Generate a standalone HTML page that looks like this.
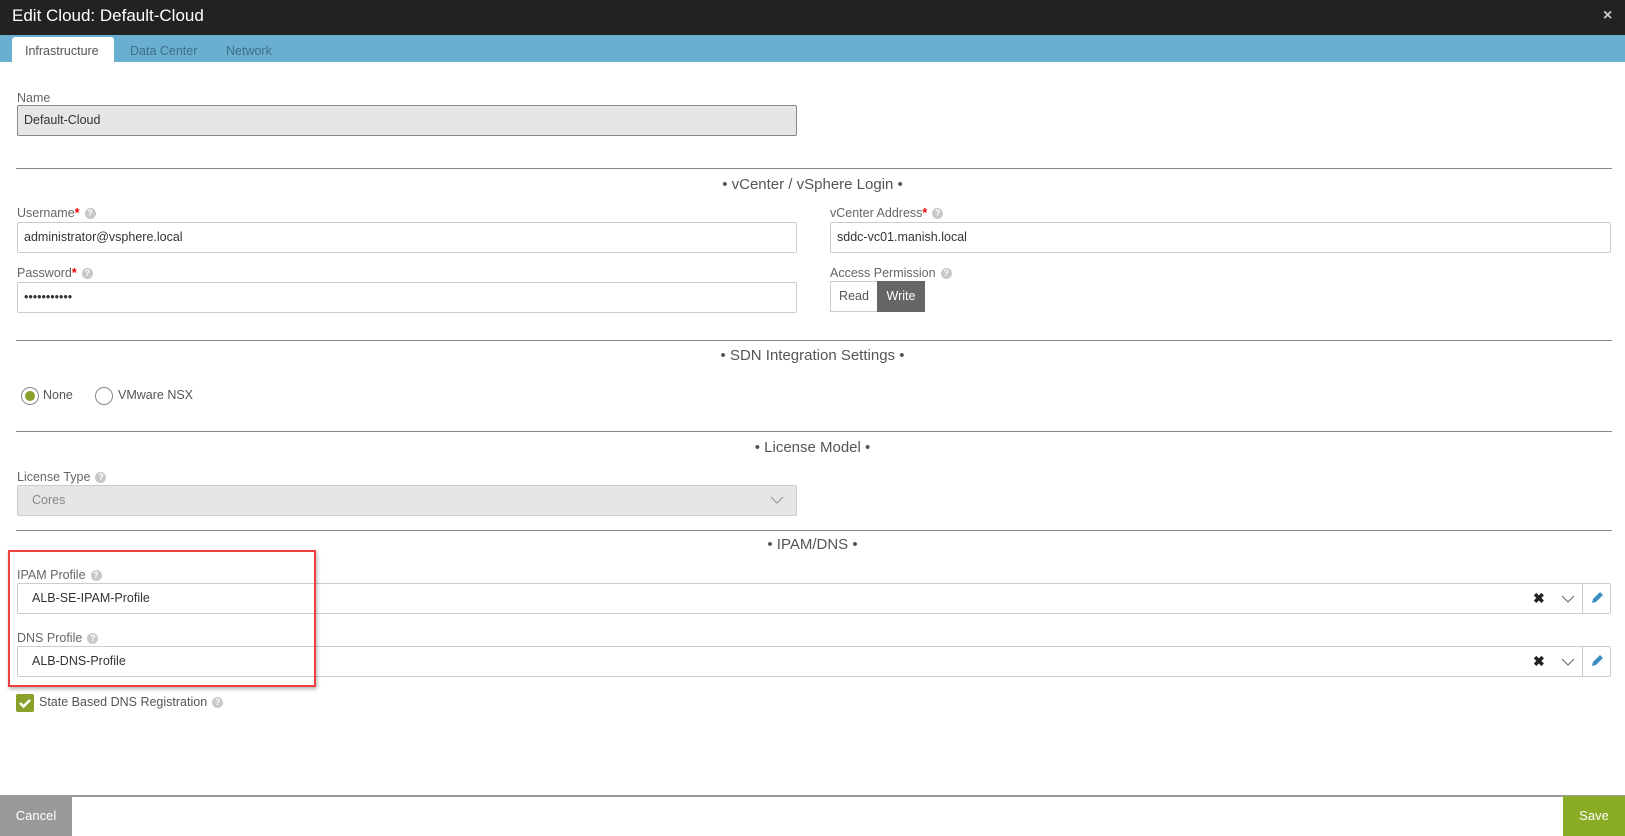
<!DOCTYPE html>
<html><head><meta charset="utf-8"><style>
*{box-sizing:border-box;margin:0;padding:0}
body{width:1625px;height:836px;position:relative;overflow:hidden;background:#fff;font-family:"Liberation Sans",sans-serif;font-size:13px;color:#555}
.a{position:absolute}
.lbl{position:absolute;font-size:12.5px;color:#666}
.req{color:#e00;font-weight:bold}
.q{display:inline-block;width:11px;height:11px;border-radius:50%;background:#c8c8c8;color:#fff;font-size:9px;line-height:11px;text-align:center;font-weight:bold;margin-left:5px;vertical-align:1px}
.inp{position:absolute;border:1px solid #ccc;border-radius:2px;height:31px;line-height:29px;padding-left:6px;font-size:12.5px;color:#333;background:#fff}
.sep{position:absolute;left:16px;right:13px;height:1px;background:#888}
.sect{position:absolute;left:0;right:0;text-align:center;font-size:15px;color:#555}
</style></head><body>
<div class="a" style="left:0;top:0;width:1625px;height:35px;background:#222"></div>
<div class="a" style="left:12px;top:6px;color:#fff;font-size:17px">Edit Cloud: Default-Cloud</div>
<div class="a" style="left:1603px;top:7px;color:#ccc;font-size:16px;font-weight:bold">×</div>
<div class="a" style="left:0;top:35px;width:1625px;height:27px;background:#6aaed0"></div>
<div class="a" style="left:12px;top:37px;width:102px;height:25px;background:#fff;border-radius:3px 3px 0 0"></div>
<div class="a" style="left:25px;top:44px;font-size:12.5px;color:#555">Infrastructure</div>
<div class="a" style="left:130px;top:44px;font-size:12.5px;color:#3d6f8a">Data Center</div>
<div class="a" style="left:226px;top:44px;font-size:12.5px;color:#3d6f8a">Network</div>

<div class="lbl" style="left:17px;top:91px">Name</div>
<div class="inp" style="left:17px;top:105px;width:780px;background:#e6e6e6;border-color:#888">Default-Cloud</div>

<div class="sep" style="top:168px"></div>
<div class="sect" style="top:176px">• vCenter / vSphere Login •</div>
<div class="lbl" style="left:17px;top:206px">Username<span class="req">*</span><span class="q">?</span></div>
<div class="inp" style="left:17px;top:222px;width:780px">administrator@vsphere.local</div>
<div class="lbl" style="left:17px;top:266px">Password<span class="req">*</span><span class="q">?</span></div>
<div class="inp" style="left:17px;top:282px;width:780px">•••••••••••</div>
<div class="lbl" style="left:830px;top:206px">vCenter Address<span class="req">*</span><span class="q">?</span></div>
<div class="inp" style="left:830px;top:222px;width:781px">sddc-vc01.manish.local</div>
<div class="lbl" style="left:830px;top:266px">Access Permission<span class="q">?</span></div>
<div class="a" style="left:830px;top:281px;width:47px;height:31px;border:1px solid #ccc;border-right:none;text-align:center;line-height:29px;font-size:12.5px;color:#555">Read</div>
<div class="a" style="left:877px;top:281px;width:48px;height:31px;background:#666;text-align:center;line-height:31px;font-size:12.5px;color:#fff">Write</div>

<div class="sep" style="top:340px"></div>
<div class="sect" style="top:347px">• SDN Integration Settings •</div>
<div class="a" style="left:21px;top:387px;width:18px;height:18px;border:1px solid #888;border-radius:50%"></div>
<div class="a" style="left:25px;top:391px;width:10px;height:10px;background:#88a12a;border-radius:50%"></div>
<div class="a" style="left:43px;top:388px;font-size:12.5px">None</div>
<div class="a" style="left:95px;top:387px;width:18px;height:18px;border:1px solid #888;border-radius:50%"></div>
<div class="a" style="left:118px;top:388px;font-size:12.5px">VMware NSX</div>

<div class="sep" style="top:431px"></div>
<div class="sect" style="top:439px">• License Model •</div>
<div class="lbl" style="left:17px;top:470px">License Type<span class="q">?</span></div>
<div class="inp" style="left:17px;top:485px;width:780px;background:#e6e6e6;color:#888;padding-left:14px">Cores</div>
<svg class="a" style="left:770px;top:495px" width="14" height="10"><path d="M1 2l6 6 6-6" fill="none" stroke="#999" stroke-width="1.2"/></svg>

<div class="sep" style="top:530px"></div>
<div class="sect" style="top:536px">• IPAM/DNS •</div>
<div class="lbl" style="left:17px;top:568px">IPAM Profile<span class="q">?</span></div>
<div class="inp" style="left:17px;top:583px;width:1594px;padding-left:14px">ALB-SE-IPAM-Profile</div>
<div class="lbl" style="left:17px;top:631px">DNS Profile<span class="q">?</span></div>
<div class="inp" style="left:17px;top:646px;width:1594px;padding-left:14px">ALB-DNS-Profile</div>
<div class="a" style="left:1582px;top:583px;width:1px;height:31px;background:#ccc"></div>
<div class="a" style="left:1582px;top:646px;width:1px;height:31px;background:#ccc"></div>
<div class="a" style="left:1533px;top:590px;font-size:14px;font-weight:bold;color:#222">✖</div>
<div class="a" style="left:1533px;top:653px;font-size:14px;font-weight:bold;color:#222">✖</div>
<svg class="a" style="left:1561px;top:594px" width="14" height="10"><path d="M1 2l6 6 6-6" fill="none" stroke="#666" stroke-width="1"/></svg>
<svg class="a" style="left:1561px;top:657px" width="14" height="10"><path d="M1 2l6 6 6-6" fill="none" stroke="#666" stroke-width="1"/></svg>
<svg class="a" style="left:1590px;top:591px" width="14" height="14"><path d="M2 12l1-4 7-7 3 3-7 7z" fill="#3a8fc0"/></svg>
<svg class="a" style="left:1590px;top:654px" width="14" height="14"><path d="M2 12l1-4 7-7 3 3-7 7z" fill="#3a8fc0"/></svg>

<div class="a" style="left:8px;top:550px;width:308px;height:137px;border:2px solid #f04040;box-shadow:1px 2px 4px rgba(0,0,0,.3)"></div>

<div class="a" style="left:16px;top:694px;width:18px;height:18px;background:#88a12a;border-radius:2px"></div>
<svg class="a" style="left:18px;top:696px" width="14" height="14"><path d="M2 7l3.5 3.5L12 4" fill="none" stroke="#fff" stroke-width="2.5"/></svg>
<div class="a" style="left:39px;top:695px;font-size:12.5px">State Based DNS Registration<span class="q">?</span></div>

<div class="a" style="left:0;top:795px;width:1625px;height:2px;background:#999"></div>
<div class="a" style="left:0;top:796px;width:72px;height:40px;background:#999;color:#fff;text-align:center;line-height:40px;font-size:13px">Cancel</div>
<div class="a" style="left:1563px;top:796px;width:62px;height:40px;background:#8aab24;color:#fff;text-align:center;line-height:40px;font-size:13px">Save</div>
</body></html>
